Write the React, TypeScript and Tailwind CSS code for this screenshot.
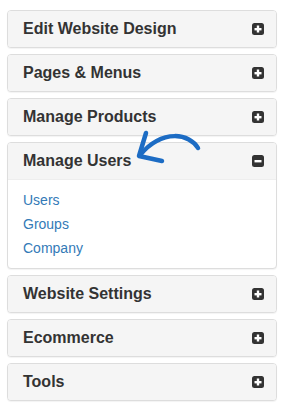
import { useState } from 'react';

const sections = [
  { title: 'Edit Website Design', links: [] as string[] },
  { title: 'Pages & Menus', links: [] as string[] },
  { title: 'Manage Products', links: [] as string[] },
  { title: 'Manage Users', links: ['Users', 'Groups', 'Company'] },
  { title: 'Website Settings', links: [] as string[] },
  { title: 'Ecommerce', links: [] as string[] },
  { title: 'Tools', links: [] as string[] },
];

const ToggleIcon = ({ open }: { open: boolean }) => (
  <svg width="12" height="12" viewBox="0 0 12 12" className="shrink-0">
    <rect x="0" y="0" width="12" height="12" rx="2.5" fill="#333" />
    <rect x="2.5" y="5" width="7" height="2.4" fill="#fff" />
    {!open && <rect x="4.8" y="2.5" width="2.4" height="7" fill="#fff" />}
  </svg>
);

const App = () => {
  const [openIdx, setOpenIdx] = useState(3);

  return (
    <div className="relative w-[285px] h-[408px] bg-white pt-[10px] pl-[7px] font-['Liberation_Sans',Arial,sans-serif]">
      <div className="w-[270px] flex flex-col gap-[6px]">
        {sections.map((s, i) => {
          const open = i === openIdx;
          return (
            <div
              key={s.title}
              className="border border-[#dddddd] rounded-[4px] bg-white shadow-[0_1px_1px_rgba(0,0,0,0.05)] overflow-hidden"
            >
              <button
                onClick={() => setOpenIdx(open ? -1 : i)}
                className="w-full h-[36px] flex items-center justify-between bg-[#f5f5f5] pl-[15px] pr-[12px] text-left"
              >
                <span className="text-[16px] leading-[18px] font-bold text-[#333333]">{s.title}</span>
                <ToggleIcon open={open} />
              </button>
              {open && (
                <div className="border-t border-[#eeeeee] py-[8px] px-[15px] flex flex-col">
                  {s.links.map((l) => (
                    <a key={l} href="#" className="h-[24px] leading-[24px] text-[14px] text-[#337ab7]">
                      {l}
                    </a>
                  ))}
                </div>
              )}
            </div>
          );
        })}
      </div>
      {/* hand-drawn annotation arrow */}
      <svg
        className="absolute left-0 top-0 pointer-events-none"
        width="285"
        height="408"
        viewBox="0 0 285 408"
      >
        <path
          d="M198 148 C190 134, 163 128, 140 155"
          stroke="#1c6cc4"
          strokeWidth="4.5"
          fill="none"
          strokeLinecap="round"
        />
        <path
          d="M146 133 L139 156 L162 161"
          stroke="#1c6cc4"
          strokeWidth="4.5"
          fill="none"
          strokeLinecap="round"
          strokeLinejoin="round"
        />
      </svg>
    </div>
  );
};

export default App;
